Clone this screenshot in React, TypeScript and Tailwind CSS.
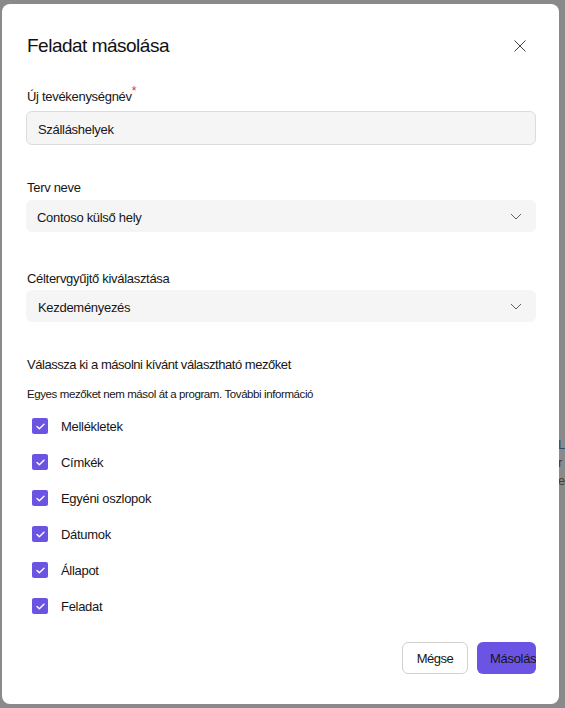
import React from "react";

const items = ["Mellékletek", "Címkék", "Egyéni oszlopok", "Dátumok", "Állapot", "Feladat"];

function Chevron() {
  return (
    <svg width="12" height="7" viewBox="0 0 12 7" fill="none">
      <path d="M1 1l5 5 5-5" stroke="#616161" strokeWidth="1" />
    </svg>
  );
}

function Check() {
  return (
    <div className="w-4 h-4 rounded-[2px] bg-[#6b53e3] flex items-center justify-center">
      <svg width="9" height="7" viewBox="0 0 9 7" fill="none">
        <path d="M1 3.6l2.3 2.2L8 1.2" stroke="white" strokeWidth="1.4" strokeLinecap="round" strokeLinejoin="round" />
      </svg>
    </div>
  );
}

export default function App() {
  return (
    <div
      className="w-[565px] h-[708px] bg-[#8a8a8a] pt-[4px] pl-[2px] overflow-hidden relative"
      style={{ fontFamily: '"Liberation Sans", Arial, sans-serif' }}
    >
      {/* bits of the page behind the overlay */}
      <div className="absolute right-0 top-[436px] w-[6px] text-[13px] leading-[18px] overflow-hidden">
        <div className="w-[20px] -ml-[1px] text-[#2b4a6e]">L</div>
        <div className="w-[20px] -ml-[1px] text-[#3a3a3a]">r</div>
        <div className="w-[20px] -ml-[1px] text-[#4a3a2a]">e</div>
      </div>
      <div className="w-[557px] h-[700px] bg-white rounded-lg pl-[24px] pr-[23px] text-[#161616] text-[13px] tracking-[-0.3px]">
        <div className="pt-[30px] h-[54px] flex items-center justify-between">
          <h1 className="text-[19px] leading-[24px] tracking-[-0.5px] ml-[1px] text-[#111]">Feladat másolása</h1>
          <button className="w-8 h-8 flex items-center justify-center">
            <svg width="12" height="12" viewBox="0 0 12 12" fill="none">
              <path d="M0.5 0.5l11 11M11.5 0.5l-11 11" stroke="#424242" strokeWidth="1" />
            </svg>
          </button>
        </div>

        <label className="block mt-[30px] h-[18px] leading-[18px] ml-[1px]">
          Új tevékenységnév
          <span className="text-[#d13438] text-[12px] align-top leading-[12px] relative -top-[3px]">*</span>
        </label>
        <div className="mt-[5px] h-[34px] rounded-md border border-[#dcdcdc] bg-[#f5f5f5] flex items-center pl-[11px] pt-[3px]">
          Szálláshelyek
        </div>

        <label className="block mt-[34px] h-[18px] leading-[18px] ml-[1px]">Terv neve</label>
        <div className="mt-[3px] h-[32px] rounded-md bg-[#f5f5f5] flex items-center justify-between pl-[11px] pr-[14px]">
          <span className="pt-[4px]">Contoso külső hely</span>
          <Chevron />
        </div>

        <label className="block mt-[38px] h-[18px] leading-[18px] ml-[1px]">Céltervgyűjtő kiválasztása</label>
        <div className="mt-[2px] h-[32px] rounded-md bg-[#f5f5f5] flex items-center justify-between pl-[12px] pr-[14px]">
          <span className="pt-[4px]">Kezdeményezés</span>
          <Chevron />
        </div>

        <p className="mt-[34px] h-[18px] leading-[18px] ml-[1px] tracking-[-0.45px]">
          Válassza ki a másolni kívánt választható mezőket
        </p>
        <p className="mt-[11px] h-[18px] leading-[18px] ml-[1px] text-[11.5px] tracking-[-0.4px]">
          Egyes mezőket nem másol át a program. További információ
        </p>

        <div className="mt-[5px] flex flex-col">
          {items.map((item) => (
            <div key={item} className="h-[36px] flex items-center gap-[13px] pl-[6px]">
              <Check />
              <span className="leading-[18px] pt-[2px]">{item}</span>
            </div>
          ))}
        </div>

        <div className="mt-[18px] flex justify-end gap-[9px]">
          <button className="w-[66px] h-[32px] rounded-md border border-[#d1d1d1] bg-white flex items-center justify-center tracking-[-0.5px] pt-[2px]">
            Mégse
          </button>
          <button className="w-[59px] h-[32px] rounded-md bg-[#6b53e3] overflow-hidden whitespace-nowrap text-left pl-[13px] pt-[2px] text-[#161616]">
            Másolás
          </button>
        </div>
      </div>
    </div>
  );
}
